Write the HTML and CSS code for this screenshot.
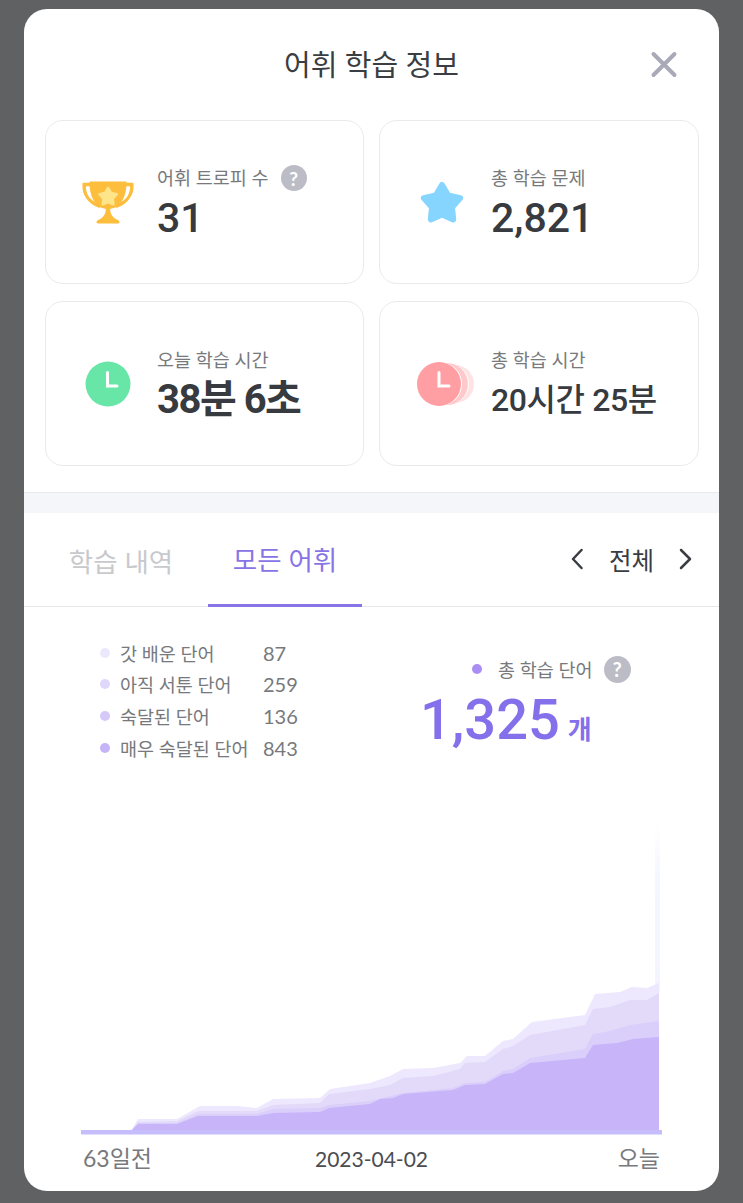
FILE: index.html
```html
<!DOCTYPE html>
<html lang="ko">
<head>
<meta charset="utf-8">
<title>어휘 학습 정보</title>
<link rel="stylesheet" href="styles.css">
</head>
<body>
<main class="sheet">
  <header class="sheet-head">
    <h1 class="sheet-title">어휘 학습 정보</h1>
    <button class="close" aria-label="닫기">
      <svg width="28" height="28" viewBox="0 0 28 28"><path d="M3.500 3 24.500 24M24.500 3 3.500 24" class="close-x"/></svg>
    </button>
  </header>

  <section class="stats">
    <article class="stat">
      <div class="stat-icon">
        <svg class="ico" width="52" height="43" viewBox="0 0 52 43">
          <path class="trophy-handle" d="M9 3.500H2.200C1.500 13 7 21 17 25M43 3.500H49.800C50.500 13 45 21 35 25"/>
          <path class="trophy-cup" d="M7.500 1.500Q7.500 .5 8.500 .5H43.500Q44.500 .5 44.500 1.500C44.500 18 37 28 26 28C15 28 7.500 18 7.500 1.500Z"/>
          <path class="trophy-cup" d="M24 26H28C28 34 31 37 36 39Q38 40 37.500 41.500Q37 42.500 36 42.500H16Q15 42.500 14.500 41.500Q14 40 16 39C21 37 24 34 24 26Z"/>
          <polygon class="trophy-star" transform="translate(15.500 4.500) scale(.48)" points="22,5 28.200,15.500 40.100,18.100 32,27.200 33.200,39.400 22,34.500 10.800,39.400 12,27.200 3.900,18.100 15.800,15.500"/>
        </svg>
      </div>
      <div class="stat-body">
        <div class="stat-label"><span>어휘 트로피 수</span><span class="help help-sm">?</span></div>
        <div class="stat-value">31</div>
      </div>
    </article>
    <article class="stat">
      <div class="stat-icon">
        <svg class="ico" width="44" height="44" viewBox="0 0 44 44">
          <polygon class="star-blue" points="22,5 28.200,15.500 40.100,18.100 32,27.200 33.200,39.400 22,34.500 10.800,39.400 12,27.200 3.900,18.100 15.800,15.500"/>
        </svg>
      </div>
      <div class="stat-body">
        <div class="stat-label">총 학습 문제</div>
        <div class="stat-value">2,821</div>
      </div>
    </article>
    <article class="stat">
      <div class="stat-icon">
        <svg class="ico" width="46" height="46" viewBox="0 0 46 46">
          <circle class="clock-green" cx="23" cy="23" r="22.500"/>
          <path class="clock-hand" d="M22.500 11.500V25H32"/>
        </svg>
      </div>
      <div class="stat-body">
        <div class="stat-label">오늘 학습 시간</div>
        <div class="stat-value stat-value-bold">38분 6초</div>
      </div>
    </article>
    <article class="stat">
      <div class="stat-icon">
        <svg class="ico-wide" width="58" height="46" viewBox="0 0 58 46">
          <circle class="clock-trail-2" cx="38" cy="23" r="19"/>
          <circle class="clock-gap" cx="32" cy="23" r="20"/>
          <circle class="clock-trail-1" cx="30" cy="23" r="21"/>
          <circle class="clock-gap" cx="23" cy="23" r="22"/>
          <circle class="clock-red" cx="22" cy="23" r="22"/>
          <path class="clock-hand" d="M22 11.500V25H32"/>
        </svg>
      </div>
      <div class="stat-body">
        <div class="stat-label">총 학습 시간</div>
        <div class="stat-value stat-value-semi">20시간 25분</div>
      </div>
    </article>
  </section>

  <div class="band"></div>

  <nav class="tabs">
    <div class="tab">학습 내역</div>
    <div class="tab tab-active">모든 어휘</div>
    <div class="period">
      <svg width="14" height="22" viewBox="0 0 14 22"><path class="chev" d="M12.500 2 4 11 12.500 20"/></svg>
      <span class="period-label">전체</span>
      <svg width="14" height="22" viewBox="0 0 14 22"><path class="chev" d="M3 2 12 11 3 20"/></svg>
    </div>
  </nav>

  <section class="summary">
    <div class="legend">
      <span class="dot dot-1"></span><span class="legend-name">갓 배운 단어</span><span class="legend-num">87</span>
      <span class="dot dot-2"></span><span class="legend-name">아직 서툰 단어</span><span class="legend-num">259</span>
      <span class="dot dot-3"></span><span class="legend-name">숙달된 단어</span><span class="legend-num">136</span>
      <span class="dot dot-4"></span><span class="legend-name">매우 숙달된 단어</span><span class="legend-num">843</span>
    </div>
    <div class="total">
      <div class="total-label"><span class="dot dot-total"></span><span>총 학습 단어</span><span class="help help-lg">?</span></div>
      <div class="total-value">1,325<span class="total-unit">개</span></div>
    </div>
  </section>

  <svg class="chart" width="695" height="316" viewBox="24 820 695 316">
    <defs>
      <linearGradient id="fade" x1="0" y1="0" x2="0" y2="1">
        <stop offset="0" stop-color="#f5f7ff" stop-opacity="0"/>
        <stop offset=".3" stop-color="#f5f7ff"/>
        <stop offset="1" stop-color="#f3f4ff"/>
      </linearGradient>
    </defs>
    <rect x="655" y="822" width="5" height="168" fill="url(#fade)"/>
    <path class="area-4" d="M131 1130L138 1118 177 1118 200 1105 237 1105 257 1107 273 1098 320 1097 330 1088 370 1082 390 1075 403 1068 433 1067 460 1062 467 1055 485 1055 503 1040 513 1038 532 1021 585 1014 595 993 620 991 632 986 647 987 659 982V1130Z"/>
    <path class="area-3" d="M131 1130L138 1121 177 1120 198 1110 257 1110 273 1104 320 1102 329 1093 370 1088 390 1084 403 1077 433 1075 460 1068 465 1062 485 1061 503 1048 513 1045 530 1034 585 1024 593 1008 610 1006 630 999 647 999 659 992V1130Z"/>
    <path class="area-2" d="M131 1130L138 1122 177 1122 198 1113 257 1113 273 1108 320 1107 329 1104 370 1100 403 1092 453 1087 465 1082 485 1081 503 1070 513 1068 530 1057 585 1048 593 1033 610 1030 630 1024 659 1020V1130Z"/>
    <path class="area-1" d="M131 1130L138 1123 177 1123 198 1115 257 1115 273 1112 320 1111 329 1107 370 1103 380 1098 393 1097 403 1093 453 1089 465 1084 485 1083 503 1073 513 1072 530 1062 585 1057 593 1044 617 1042 633 1038 659 1036V1130Z"/>
    <rect class="area-base" x="81" y="1129" width="581" height="4.500"/>
  </svg>

  <footer class="axis">
    <span class="axis-start">63일전</span>
    <span class="axis-mid">2023-04-02</span>
    <span class="axis-end">오늘</span>
  </footer>
</main>
</body>
</html>
```
FILE: styles.css
```css
* { box-sizing: border-box; }
html, body { margin: 0; height: 100%; }
body {
  background: #5f6163;
  font-family: Lato, "Noto Sans CJK KR", "Noto Sans", sans-serif;
  overflow: hidden;
  padding: 9px 24px 0;
}
.sheet {
  width: 695px;
  height: 1182px;
  background: #fff;
  border-radius: 23px;
  overflow: hidden;
  display: flex;
  flex-direction: column;
}
.sheet-head {
  height: 111px;
  flex: none;
  display: grid;
  grid-template-columns: 1fr auto 1fr;
  align-items: center;
  padding: 0 41px;
}
.sheet-title {
  grid-column: 2;
  margin: 0;
  font-size: 29px;
  font-weight: 400;
  color: #3a3d42;
  line-height: 40px;
}
.close {
  grid-column: 3;
  justify-self: end;
  width: 28px;
  height: 28px;
  padding: 0;
  border: 0;
  background: none;
  display: block;
}
.close svg { display: block; }
.close-x { stroke: #a9a9b8; stroke-width: 4; stroke-linecap: round; fill: none; }

.stats {
  flex: none;
  display: grid;
  grid-template-columns: 319px 320px;
  grid-template-rows: 164px 165px;
  column-gap: 15px;
  row-gap: 17px;
  padding: 0 20px 26px 21px;
}
.stat {
  border: 1px solid #e9eaed;
  border-radius: 18px;
  display: flex;
  align-items: center;
  padding-left: 36px;
  gap: 23px;
}
.stat-icon {
  width: 52px;
  height: 46px;
  flex: none;
  display: flex;
  align-items: center;
  justify-content: center;
}
.ico { display: block; overflow: visible; }
.ico-wide { display: block; flex: none; margin-left: 8px; overflow: visible; }
.stat-body { display: flex; flex-direction: column; }
.stat-label {
  font-size: 18.500px;
  line-height: 28px;
  color: #77797d;
  display: flex;
  align-items: center;
  gap: 12px;
  white-space: pre;
}
.stat-value {
  font-family: Roboto, "Noto Sans CJK KR", sans-serif;
  font-size: 41px;
  line-height: 48px;
  font-weight: 500;
  color: #373b40;
  white-space: nowrap;
  padding-top: 2px;
  margin-bottom: -2px;
}
.stat-value-bold { font-size: 40px; font-weight: 700; letter-spacing: -1.500px; }
.stat-value-semi { font-size: 32px; font-weight: 500; letter-spacing: -.4px; }

.help {
  display: inline-flex;
  align-items: center;
  justify-content: center;
  border-radius: 50%;
  background: #bcbcc6;
  color: #fff;
  font-weight: 700;
  line-height: 1;
}
.help-sm { width: 26px; height: 26px; font-size: 19px; }
.help-lg { width: 27px; height: 27px; font-size: 20px; }

.trophy-handle { fill: none; stroke: #fdbd3d; stroke-width: 3.500; stroke-linecap: round; }
.trophy-cup { fill: #fdbd3d; }
.trophy-star { fill: #fee58a; stroke: #fee58a; stroke-width: 5; stroke-linejoin: round; }
.star-blue { fill: #85d5ff; stroke: #85d5ff; stroke-width: 6; stroke-linejoin: round; }
.clock-green { fill: #68e6a8; }
.clock-red { fill: #ff9fa4; }
.clock-trail-1 { fill: #ffc8ca; }
.clock-trail-2 { fill: #ffe2e3; }
.clock-gap { fill: #fff; }
.clock-hand { fill: none; stroke: #fff; stroke-width: 3; stroke-linecap: round; stroke-linejoin: miter; }

.band {
  flex: none;
  height: 21px;
  background: #f5f6f9;
  border-top: 1px solid #e9eaed;
}
.tabs {
  flex: none;
  height: 94px;
  display: flex;
  align-items: stretch;
  gap: 10px;
  padding: 0 27px 0 20px;
  border-bottom: 1px solid #e7e7ea;
}
.tab {
  width: 154px;
  height: 94px;
  display: flex;
  align-items: center;
  justify-content: center;
  font-size: 26.500px;
  color: #c8c9cc;
}
.tab-active {
  color: #8874e6;
  border-bottom: 3px solid #8874e6;
}
.period {
  margin-left: auto;
  display: flex;
  align-items: center;
  gap: 26px;
  padding-bottom: 1px;
  color: #3a3d42;
}
.period svg { display: block; }
.chev { fill: none; stroke: #3a3d42; stroke-width: 2.500; stroke-linecap: round; stroke-linejoin: round; }
.period-label { font-size: 24.500px; margin-right: -2px; }

.summary {
  flex: none;
  height: 214px;
  display: flex;
  align-items: flex-start;
  gap: 123px;
  padding: 30px 0 0 76px;
}
.legend {
  display: grid;
  grid-template-columns: 10px 133px 34px;
  grid-auto-rows: 31.600px;
  column-gap: 10px;
  align-items: center;
  color: #77797d;
}
.legend-name { font-size: 18.500px; white-space: nowrap; }
.legend-num { font-size: 20px; white-space: nowrap; }
.dot { display: block; width: 10px; height: 10px; border-radius: 50%; }
.dot-1 { background: #ece8fc; }
.dot-2 { background: #e0d8fb; }
.dot-3 { background: #d5c9fa; }
.dot-4 { background: #c6b4f8; }
.dot-total { background: #ab8ef5; margin: 0 16px 0 52px; }
.total { display: flex; flex-direction: column; padding-top: 14px; }
.total-label {
  display: flex;
  align-items: center;
  height: 36px;
  font-size: 18.500px;
  color: #77797d;
  white-space: nowrap;
}
.total-label .help { margin-left: 11px; }
.total-value {
  font-family: Roboto, "Noto Sans CJK KR", sans-serif;
  font-size: 56px;
  font-weight: 500;
  line-height: 64px;
  padding-top: 1px;
  color: #8470ea;
  white-space: nowrap;
}
.total-unit { font-size: 26px; font-weight: 700; margin-left: 8px; }

.chart { display: block; flex: none; }
.area-4 { fill: #ede8fd; }
.area-3 { fill: #e3dafa; }
.area-2 { fill: #dacefa; }
.area-1 { fill: #c7b4f9; }
.area-base { fill: #c5bdfc; }

.axis {
  flex: none;
  display: grid;
  grid-template-columns: 1fr auto 1fr;
  align-items: center;
  height: 40px;
  padding: 0 59px;
  color: #77797d;
}
.axis-start { font-size: 23px; }
.axis-mid { font-size: 21px; color: #4a4c50; padding-top: 3px; }
.axis-end { font-size: 23px; justify-self: end; }
```
